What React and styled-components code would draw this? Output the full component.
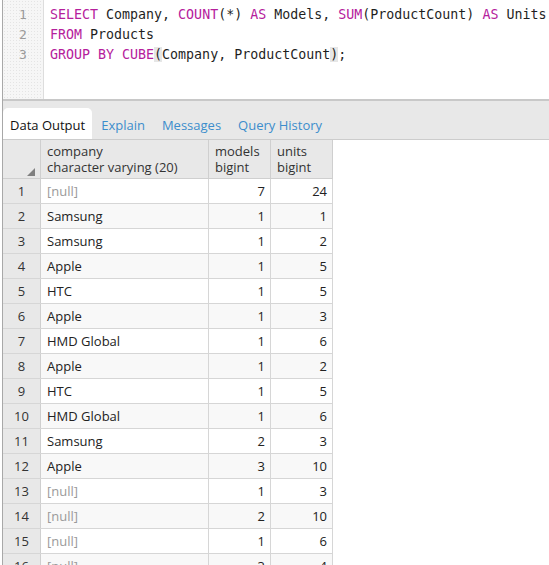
import React from 'react'
import styled, { createGlobalStyle } from 'styled-components'

const GlobalStyle = createGlobalStyle`
  html, body {
    margin: 0;
    padding: 0;
    background: #ffffff;
  }
  body {
    font-family: "Open Sans", "Liberation Sans", sans-serif;
  }
`

const code = [
  [['kw', 'SELECT'], ['id', ' Company, '], ['kw', 'COUNT'], ['id', '(*) '], ['kw', 'AS'], ['id', ' Models, '], ['kw', 'SUM'], ['id', '(ProductCount) '], ['kw', 'AS'], ['id', ' Units']],
  [['kw', 'FROM'], ['id', ' Products']],
  [['kw', 'GROUP BY CUBE'], ['br', '('], ['id', 'Company, ProductCount'], ['br', ')'], ['id', ';']],
]

const rows = [
  [null, 7, 24],
  ['Samsung', 1, 1],
  ['Samsung', 1, 2],
  ['Apple', 1, 5],
  ['HTC', 1, 5],
  ['Apple', 1, 3],
  ['HMD Global', 1, 6],
  ['Apple', 1, 2],
  ['HTC', 1, 5],
  ['HMD Global', 1, 6],
  ['Samsung', 2, 3],
  ['Apple', 3, 10],
  [null, 1, 3],
  [null, 2, 10],
  [null, 1, 6],
  [null, 3, 4],
]

const tabs = ['Data Output', 'Explain', 'Messages', 'Query History']

export default function App() {
  return (
    <Page>
      <GlobalStyle />
      <Editor>
        <Gutter>
          {code.map((_, i) => (
            <LineNo key={i}>{i + 1}</LineNo>
          ))}
        </Gutter>
        <Lines>
          {code.map((line, i) => (
            <CodeLine key={i}>
              {line.map(([kind, text], j) => (
                <Token key={j} kind={kind}>{text}</Token>
              ))}
            </CodeLine>
          ))}
        </Lines>
      </Editor>
      <TabBar>
        {tabs.map((t, i) => (
          <Tab key={t} active={i === 0}>{t}</Tab>
        ))}
      </TabBar>
      <Grid>
        <thead>
          <tr>
            <CornerCell><Corner /></CornerCell>
            <HeadCell width={168}>company<br />character varying (20)</HeadCell>
            <HeadCell width={62}>models<br />bigint</HeadCell>
            <HeadCell width={62}>units<br />bigint</HeadCell>
          </tr>
        </thead>
        <tbody>
          {rows.map((r, i) => (
            <Row key={i} even={i % 2 === 1}>
              <RowNum>{i + 1}</RowNum>
              <Cell muted={r[0] === null}>{r[0] === null ? '[null]' : r[0]}</Cell>
              <Cell numeric>{r[1]}</Cell>
              <Cell numeric>{r[2]}</Cell>
            </Row>
          ))}
        </tbody>
      </Grid>
    </Page>
  )
}

const Page = styled.div`
  width: 549px;
  height: 565px;
  overflow: hidden;
  border-left: 1px solid #a8a8a8;
  margin-left: 2px;
  box-sizing: border-box;
`

const Editor = styled.div`
  display: flex;
  height: 99px;
  border-bottom: 2px solid #c8c8c8;
`

const Gutter = styled.div`
  width: 40px;
  padding-top: 5px;
  background-color: #f6f6f6;
  background-image: radial-gradient(#e4e4e4 0.6px, transparent 0.7px);
  background-size: 3px 3px;
  border-right: 1px solid #dddddd;
`

const LineNo = styled.div`
  height: 20px;
  line-height: 20px;
  padding-left: 16px;
  font-family: "DejaVu Sans Mono", "Liberation Mono", monospace;
  font-size: 13px;
  color: #9a9a9a;
`

const Lines = styled.div`
  flex: 1;
  padding: 5px 0 0 6px;
  white-space: pre;
`

const CodeLine = styled.div`
  height: 20px;
  line-height: 20px;
  font-family: "DejaVu Sans Mono", "Liberation Mono", monospace;
  font-size: 13.3px;
  color: #222222;
`

const Token = styled.span`
  color: ${p => (p.kind === 'kw' ? '#b5209c' : '#1f1f1f')};
  background: ${p => (p.kind === 'br' ? '#e6e6e6' : 'transparent')};
`

const TabBar = styled.div`
  display: flex;
  align-items: flex-end;
  height: 39px;
  background: #e8e8e8;
  border-bottom: 1px solid #cccccc;
  box-sizing: border-box;
`

const Tab = styled.div`
  height: 31px;
  box-sizing: border-box;
  padding: 4px 7px 0;
  line-height: 27px;
  margin-right: ${p => (p.active ? '2px' : '3px')};
  font-size: 13px;
  color: ${p => (p.active ? '#111111' : '#3c8dcc')};
  background: ${p => (p.active ? '#ffffff' : 'transparent')};
  border-radius: 5px 5px 0 0;
`

const Grid = styled.table`
  border-collapse: collapse;
  table-layout: fixed;
  font-size: 13px;
  color: #222222;
`

const HeadCell = styled.th`
  width: ${p => p.width - 7}px;
  height: 38px;
  padding: 0 0 0 6px;
  text-align: left;
  font-weight: normal;
  line-height: 16px;
  color: #333333;
  background: #e8e8e8;
  border-right: 1px solid #cfcfcf;
  border-bottom: 1px solid #cfcfcf;
  vertical-align: middle;
`

const CornerCell = styled.th`
  position: relative;
  width: 37px;
  padding: 0;
  background: #e8e8e8;
  border-right: 1px solid #cfcfcf;
  border-bottom: 1px solid #cfcfcf;
`

const Corner = styled.span`
  position: absolute;
  right: 5px;
  bottom: 2px;
  width: 0;
  height: 0;
  border-left: 8px solid transparent;
  border-bottom: 8px solid #808080;
`

const Row = styled.tr`
  height: 25px;
  background: ${p => (p.even ? '#f8f8f8' : '#ffffff')};
`

const RowNum = styled.td`
  padding: 0;
  text-align: center;
  background: #e8e8e8;
  color: #333333;
  border-right: 1px solid #cfcfcf;
  border-bottom: 1px solid #d6d6d6;
`

const Cell = styled.td`
  padding: 0 5px 0 6px;
  text-align: ${p => (p.numeric ? 'right' : 'left')};
  color: ${p => (p.muted ? '#9a9a9a' : '#222222')};
  border-right: 1px solid #d6d6d6;
  border-bottom: 1px solid #d6d6d6;
  white-space: nowrap;
`
